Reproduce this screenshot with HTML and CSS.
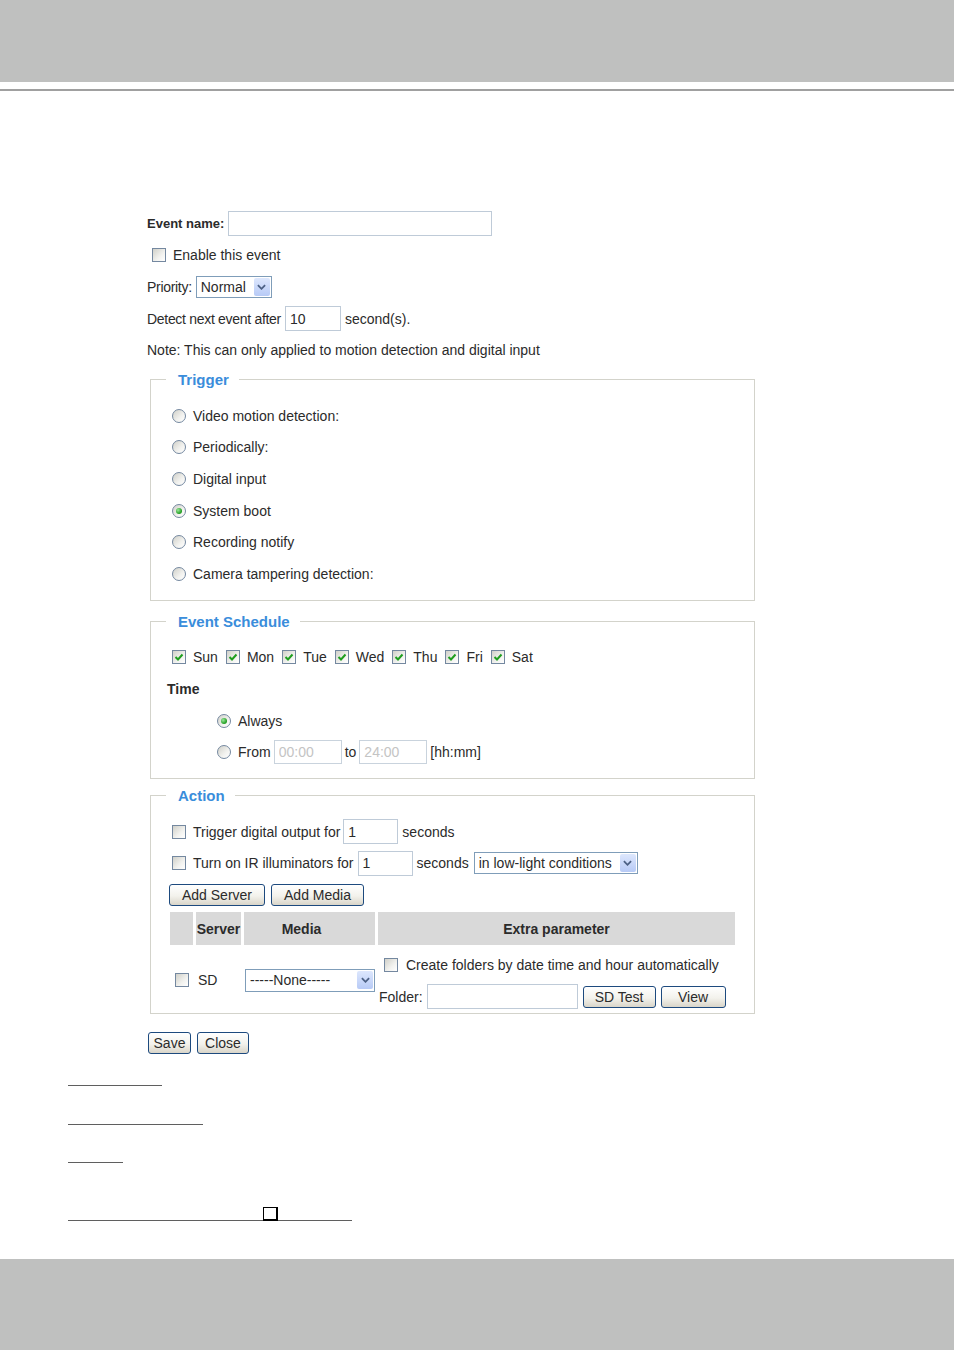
FILE: index.html
```html
<!DOCTYPE html>
<html lang="en">
<head>
  <meta charset="UTF-8">
  <meta name="viewport" content="width=device-width, initial-scale=1.0">
  <title>Event Settings</title>
  <link rel="stylesheet" href="styles.css">
</head>
<body>
  <div class="top-band"></div>
  <div class="top-rule"></div>

  <div class="container">
    <div class="row">
      <label class="name-label" for="eventName">Event name:</label>
      <input type="text" id="eventName" class="field name-field">
    </div>
    <div class="row">
      <span class="cb enable-cb"></span>
      <span>Enable this event</span>
    </div>
    <div class="row">
      <span class="tight">Priority:</span>
      <span class="select priority-select">
        <span class="value">Normal</span>
        <span class="arrow"><svg viewBox="0 0 10 6" width="9" height="6"><path d="M1 1 L5 5 L9 1" fill="none" stroke="#4d6185" stroke-width="2"/></svg></span>
      </span>
    </div>
    <div class="row">
      <span class="tight">Detect next event after</span>
      <input type="text" class="field delay-field" value="10">
      <span>second(s).</span>
    </div>
    <div class="row">
      <span>Note: This can only applied to motion detection and digital input</span>
    </div>

    <fieldset class="box trigger">
      <legend>Trigger</legend>
      <div class="row"><span class="rd"></span><span>Video motion detection:</span></div>
      <div class="row"><span class="rd"></span><span>Periodically:</span></div>
      <div class="row"><span class="rd"></span><span>Digital input</span></div>
      <div class="row"><span class="rd on"></span><span>System boot</span></div>
      <div class="row"><span class="rd"></span><span>Recording notify</span></div>
      <div class="row"><span class="rd"></span><span>Camera tampering detection:</span></div>
    </fieldset>

    <fieldset class="box schedule">
      <legend>Event Schedule</legend>
      <div class="row days">
        <span class="day"><span class="cb on"><svg viewBox="0 0 12 12" width="12" height="12"><path d="M2.5 6 L5 8.5 L9.5 3.5" fill="none" stroke="#1f9e1f" stroke-width="2"/></svg></span>Sun</span>
        <span class="day"><span class="cb on"><svg viewBox="0 0 12 12" width="12" height="12"><path d="M2.5 6 L5 8.5 L9.5 3.5" fill="none" stroke="#1f9e1f" stroke-width="2"/></svg></span>Mon</span>
        <span class="day"><span class="cb on"><svg viewBox="0 0 12 12" width="12" height="12"><path d="M2.5 6 L5 8.5 L9.5 3.5" fill="none" stroke="#1f9e1f" stroke-width="2"/></svg></span>Tue</span>
        <span class="day"><span class="cb on"><svg viewBox="0 0 12 12" width="12" height="12"><path d="M2.5 6 L5 8.5 L9.5 3.5" fill="none" stroke="#1f9e1f" stroke-width="2"/></svg></span>Wed</span>
        <span class="day"><span class="cb on"><svg viewBox="0 0 12 12" width="12" height="12"><path d="M2.5 6 L5 8.5 L9.5 3.5" fill="none" stroke="#1f9e1f" stroke-width="2"/></svg></span>Thu</span>
        <span class="day"><span class="cb on"><svg viewBox="0 0 12 12" width="12" height="12"><path d="M2.5 6 L5 8.5 L9.5 3.5" fill="none" stroke="#1f9e1f" stroke-width="2"/></svg></span>Fri</span>
        <span class="day"><span class="cb on"><svg viewBox="0 0 12 12" width="12" height="12"><path d="M2.5 6 L5 8.5 L9.5 3.5" fill="none" stroke="#1f9e1f" stroke-width="2"/></svg></span>Sat</span>
      </div>
      <div class="row time-title">Time</div>
      <div class="row indent"><span class="rd on"></span><span>Always</span></div>
      <div class="row indent">
        <span class="rd"></span><span>From</span>
        <input type="text" class="field time-field" value="00:00" disabled>
        <span class="gap">to</span>
        <input type="text" class="field time-field" value="24:00" disabled>
        <span class="gap">[hh:mm]</span>
      </div>
    </fieldset>

    <fieldset class="box action">
      <legend>Action</legend>
      <div class="row">
        <span class="cb"></span><span>Trigger digital output for</span>
        <input type="text" class="field sec-field" value="1">
        <span>seconds</span>
      </div>
      <div class="row">
        <span class="cb"></span><span>Turn on IR illuminators for</span>
        <input type="text" class="field sec-field ir-field" value="1">
        <span>seconds</span>
        <span class="select ir-select">
          <span class="value">in low-light conditions</span>
          <span class="arrow"><svg viewBox="0 0 10 6" width="9" height="6"><path d="M1 1 L5 5 L9 1" fill="none" stroke="#4d6185" stroke-width="2"/></svg></span>
        </span>
      </div>
      <div class="row add-buttons">
        <button type="button" class="btn add-server">Add Server</button>
        <button type="button" class="btn add-media">Add Media</button>
      </div>

      <div class="media-table">
        <div class="th"></div>
        <div class="th">Server</div>
        <div class="th th-media">Media</div>
        <div class="th">Extra parameter</div>

        <div class="td td-check"><span class="cb"></span></div>
        <div class="td td-server">SD</div>
        <div class="td td-media">
          <span class="select media-select">
            <span class="value">-----None-----</span>
            <span class="arrow"><svg viewBox="0 0 10 6" width="9" height="6"><path d="M1 1 L5 5 L9 1" fill="none" stroke="#4d6185" stroke-width="2"/></svg></span>
          </span>
        </div>
        <div class="td td-extra">
          <div class="extra-line">
            <span class="cb"></span><span>Create folders by date time and hour automatically</span>
          </div>
          <div class="folder-line">
            <span>Folder:</span>
            <input type="text" class="field folder-field">
            <button type="button" class="btn sd-test">SD Test</button>
            <button type="button" class="btn view">View</button>
          </div>
        </div>
      </div>
    </fieldset>

    <div class="footer-buttons">
      <button type="button" class="btn save">Save</button>
      <button type="button" class="btn close">Close</button>
    </div>
  </div>

  <div class="blanks">
    <div class="blank blank-1"></div>
    <div class="blank blank-2"></div>
    <div class="blank blank-3"></div>
    <div class="blank blank-4"><span class="square"></span></div>
  </div>

  <div class="bottom-band"></div>
</body>
</html>
```

FILE: styles.css
```css
body {
  margin: 0;
  font-family: "Liberation Sans", Arial, sans-serif;
  font-size: 14px;
  color: #2b2b2b;
  background-color: #fff;
  display: flex;
  flex-direction: column;
  min-height: 1350px;
}
.top-band {
  height: 82px;
  background-color: #bfc0bf;
}
.top-rule {
  height: 2px;
  margin-top: 7px;
  background-color: #a0a0a0;
}
.container {
  padding: 117px 0 0 147px;
  width: 610px;
}
.row {
  height: 31.6px;
  display: flex;
  align-items: center;
  white-space: nowrap;
}
.tight {
  letter-spacing: -0.3px;
}
.name-label {
  font-weight: bold;
  font-size: 13px;
  margin-right: 4px;
}
input.field {
  box-sizing: border-box;
  height: 25px;
  margin: 0;
  padding: 0 4px;
  border: 1px solid #bfcbd8;
  font: 14px "Liberation Sans", Arial, sans-serif;
  color: #2b2b2b;
  background: #fff;
}
input.field:disabled {
  color: #c4c4c4;
  border-color: #c9d3dd;
}
.name-field {
  width: 264px;
  margin-left: 1px;
}
.delay-field {
  width: 56px;
  margin: 0 4px !important;
}

/* fake checkboxes and radios */
.cb, .rd {
  box-sizing: border-box;
  width: 14px;
  height: 14px;
  flex: none;
  display: inline-flex;
  align-items: center;
  justify-content: center;
  border: 1px solid #7488a0;
  background: linear-gradient(135deg, #d0d0c9 0%, #f2f2ef 60%, #fff 100%);
  margin-right: 7px;
}
.rd {
  border-radius: 50%;
}
.rd.on::after {
  content: "";
  width: 6px;
  height: 6px;
  border-radius: 50%;
  background: radial-gradient(circle at 35% 35%, #9be89b, #1c9a1c 70%);
}
.enable-cb {
  margin-left: 5px;
}

.select {
  box-sizing: border-box;
  display: inline-flex;
  align-items: center;
  height: 22px;
  border: 1px solid #7f9db9;
  background: #fff;
  padding-left: 4px;
}
.select .value {
  flex: 1;
  overflow: hidden;
}
.select .arrow {
  width: 16px;
  height: 18px;
  margin-right: 1px;
  border-radius: 2px;
  background: linear-gradient(#dde7fd, #b7caf6);
  display: flex;
  align-items: center;
  justify-content: center;
}
.priority-select {
  width: 76px;
  margin-left: 4px;
}

/* fieldsets */
.box {
  box-sizing: border-box;
  width: 605px;
  margin: 0 0 0 3px;
  padding: 11px 0 10px 21px;
  border: 1px solid #d3d3cb;
  min-width: 0;
}
.box legend {
  font-size: 15px;
  font-weight: bold;
  color: #3a8ddb;
  line-height: 18px;
  padding: 0 10px 0 12px;
  margin-left: -6px;
}
.trigger {
  margin-top: 5px;
}
.schedule {
  margin-top: 12px;
}
.action {
  margin-top: 8px;
  padding-bottom: 3px;
}

.day {
  display: inline-flex;
  align-items: center;
  margin-right: 8px;
}
.time-title {
  font-weight: bold;
  margin-left: -5px;
}
.indent {
  padding-left: 45px;
}
.time-field {
  width: 68px;
  height: 24px !important;
  margin-left: 3px !important;
}
.gap {
  margin-left: 3px;
}

.sec-field {
  width: 55px;
  margin: 0 4px 0 3px !important;
}
.ir-field {
  margin-left: 4px !important;
}
.ir-select {
  width: 164px;
  margin-left: 5px;
}

.btn {
  box-sizing: border-box;
  height: 22px;
  padding: 0;
  border: 1px solid #1d4a7e;
  border-radius: 3px;
  background: linear-gradient(#ffffff, #f3f2ec 55%, #d9d5c9);
  font: 14px "Liberation Sans", Arial, sans-serif;
  color: #2b2b2b;
  cursor: pointer;
}
.add-buttons {
  margin-left: -3px;
}
.add-server {
  width: 96px;
  margin-top: 1px;
}
.add-media {
  width: 93px;
  margin: 1px 0 0 6px;
}

.media-table {
  display: grid;
  grid-template-columns: 23px 45px 131px 357px;
  column-gap: 3px;
  margin: 1px 0 0 -2px;
  width: 565px;
}
.th {
  height: 33px;
  background-color: #d9d9d9;
  font-weight: bold;
  display: flex;
  align-items: center;
  justify-content: center;
  padding-top: 1px;
  box-sizing: border-box;
}
.th-media {
  padding-right: 16px;
}
.td {
  display: flex;
  align-items: center;
  padding-top: 6px;
}
.td-check {
  justify-content: center;
}
.td-check .cb {
  margin: 0 0 0 1px;
}
.td-server {
  padding-left: 2px;
}
.media-select {
  width: 130px;
  height: 23px;
  margin-left: 1px;
}
.td-extra {
  flex-direction: column;
  align-items: stretch;
  padding-top: 5px;
}
.extra-line {
  height: 30px;
  display: flex;
  align-items: center;
  padding-left: 6px;
  white-space: nowrap;
}
.extra-line .cb {
  margin-right: 8px;
}
.folder-line {
  height: 26px;
  margin-top: 4px;
  display: flex;
  align-items: center;
  padding-left: 1px;
}
.folder-field {
  width: 151px;
  margin-left: 4px !important;
}
.sd-test {
  width: 73px;
  margin-left: 5px;
}
.view {
  width: 65px;
  margin-left: 5px;
}

.footer-buttons {
  display: flex;
  margin: 18px 0 0 1px;
}
.save {
  width: 43px;
}
.close {
  width: 52px;
  margin-left: 6px;
}

/* blank lines at the bottom */
.blanks {
  padding-left: 68px;
}
.blank {
  border-bottom: 1px solid #5f5f5f;
}
.blank-1 {
  width: 94px;
  margin-top: 31px;
}
.blank-2 {
  width: 135px;
  margin-top: 38px;
}
.blank-3 {
  width: 55px;
  margin-top: 37px;
}
.blank-4 {
  width: 284px;
  margin-top: 44px;
  display: flex;
  align-items: flex-end;
  padding-left: 195px;
  box-sizing: border-box;
}
.square {
  box-sizing: border-box;
  width: 15px;
  height: 14px;
  border: 1px solid #000;
  border-right-width: 2px;
  border-bottom-width: 2px;
  background: #fff;
  margin-bottom: -1px;
}

.bottom-band {
  margin-top: auto;
  height: 91px;
  background-color: #bfc0bf;
}
```
